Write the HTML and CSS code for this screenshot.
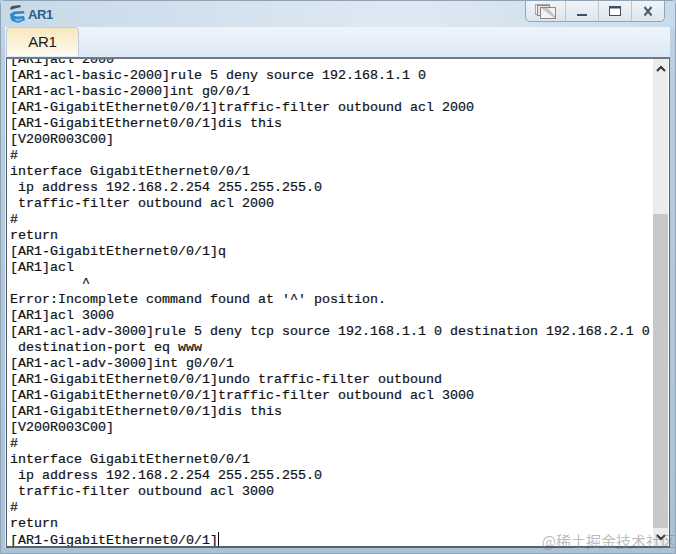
FILE: index.html
```
<!DOCTYPE html>
<html lang="en">
<head>
<meta charset="utf-8">
<title>AR1</title>
<link rel="stylesheet" href="styles.css">
</head>
<body>
<div class="window">
  <header class="titlebar">
    <div class="title">
      <svg class="app-icon" width="17" height="20" viewBox="0 0 17 20">
        <path d="M1 4 L3 2 L11 1 L12 3 L4 5 L2 6 Z" fill="#47535e"/>
        <path d="M1 10 L5 7.5 L15 7 L15.5 9.5 L7 10 L4.5 11.5 L8 12.5 L15 12 L16 16 L9 19 L3 17 L1.5 14 Z" fill="#2f88c9"/>
        <path d="M5 15 L13 14.5 L13.5 16 L8 17.5 Z" fill="#74bcea"/>
      </svg>
      <span class="title-text">AR1</span>
    </div>
    <div class="controls">
      <button class="ctl ctl-restore" aria-label="Restore">
        <svg width="21" height="15" viewBox="0 0 21 15">
          <rect x="0.5" y="0.5" width="14" height="10" fill="#f4f4f4" stroke="#a8a8a8"/>
          <rect x="2.5" y="1.5" width="12" height="10" fill="#e4e4e4" stroke="#8a8a8a"/>
          <rect x="5.5" y="3.5" width="15" height="11" fill="#f3f3f3" stroke="#8a8a8a"/>
          <path d="M6 4 H13 L20 12 V14 H19 L6 4 Z" fill="#c6c6c6"/>
        </svg>
      </button>
      <button class="ctl" aria-label="Minimize">
        <svg width="12" height="12" viewBox="0 0 12 12"><rect x="1" y="9" width="10" height="2" fill="#3c5064"/></svg>
      </button>
      <button class="ctl" aria-label="Maximize">
        <svg width="12" height="12" viewBox="0 0 12 12"><rect x="0.5" y="1.5" width="11" height="9" fill="#fff" stroke="#3c5064"/><rect x="0" y="1" width="12" height="2.5" fill="#3c5064"/></svg>
      </button>
      <button class="ctl ctl-close" aria-label="Close">
        <svg width="12" height="12" viewBox="0 0 12 12"><path d="M2.5 2 L9.5 10.5 M9.5 2 L2.5 10.5" stroke="#4a5a68" stroke-width="2" fill="none"/></svg>
      </button>
    </div>
  </header>
  <div class="panel">
    <nav class="tabs"><div class="tab">AR1</div></nav>
    <main class="terminal">
      <div class="screen">
<pre class="output">[AR1]acl 2000
[AR1-acl-basic-2000]rule 5 deny source 192.168.1.1 0
[AR1-acl-basic-2000]int g0/0/1
[AR1-GigabitEthernet0/0/1]traffic-filter outbound acl 2000
[AR1-GigabitEthernet0/0/1]dis this
[V200R003C00]
#
interface GigabitEthernet0/0/1
 ip address 192.168.2.254 255.255.255.0
 traffic-filter outbound acl 2000
#
return
[AR1-GigabitEthernet0/0/1]q
[AR1]acl
         ^
Error:Incomplete command found at '^' position.
[AR1]acl 3000
[AR1-acl-adv-3000]rule 5 deny tcp source 192.168.1.1 0 destination 192.168.2.1 0
 destination-port eq www
[AR1-acl-adv-3000]int g0/0/1
[AR1-GigabitEthernet0/0/1]undo traffic-filter outbound
[AR1-GigabitEthernet0/0/1]traffic-filter outbound acl 3000
[AR1-GigabitEthernet0/0/1]dis this
[V200R003C00]
#
interface GigabitEthernet0/0/1
 ip address 192.168.2.254 255.255.255.0
 traffic-filter outbound acl 3000
#
return
[AR1-GigabitEthernet0/0/1]<span class="caret"></span></pre>
      </div>
      <div class="scrollbar">
        <div class="arrow"><svg width="10" height="7" viewBox="0 0 10 7"><path d="M1 6 L5 2 L9 6" stroke="#333" stroke-width="2" fill="none"/></svg></div>
        <div class="track"><div class="thumb"></div></div>
        <div class="arrow"><svg width="10" height="7" viewBox="0 0 10 7"><path d="M1 1 L5 5 L9 1" stroke="#333" stroke-width="2" fill="none"/></svg></div>
      </div>
    </main>
  </div>
</div>
<div class="watermark">@稀土掘金技术社区</div>
</body>
</html>
```
FILE: styles.css
```
* { box-sizing: border-box; }
html, body { margin: 0; padding: 0; }
body {
  width: 676px;
  height: 554px;
  overflow: hidden;
  position: relative;
  background: #b4c9dc;
}
.window {
  width: 676px;
  height: 554px;
  display: flex;
  flex-direction: column;
  padding: 0 5px 5px 4px;
  border: 1px solid #8fa3b5;
  border-radius: 5px 5px 0 0;
  background: linear-gradient(#c6d8e8, #b9cee0 60px, #a9c2d8);
}
.titlebar {
  height: 26px;
  flex: none;
  display: flex;
  justify-content: space-between;
  margin: 0 -5px 0 -4px;
  padding: 0 10px 0 8px;
  background: linear-gradient(90deg, #c7d9e9, #dfe9f3 60%, #c9dbea);
}
.title {
  display: flex;
  align-items: center;
  gap: 2px;
}
.app-icon { flex: none; }
.title-text {
  font: bold 13px "Liberation Sans", Arial, sans-serif;
  letter-spacing: -0.4px;
  color: #2f5c85;
}
.controls {
  display: flex;
  height: 21px;
  border: 1px solid #93a6b6;
  border-top: 0;
  border-radius: 0 0 5px 5px;
  background: linear-gradient(#eef3f7, #dde6ee);
}
.ctl {
  width: 33px;
  padding: 0;
  border: 0;
  border-left: 1px solid #bcc8d2;
  background: none;
  display: flex;
  align-items: center;
  justify-content: center;
}
.ctl-restore { width: 39px; border-left: 0; }
.panel {
  flex: 1;
  min-height: 0;
  display: flex;
  flex-direction: column;
  background: linear-gradient(#e9f0f8, #dfeaf6);
}
.tabs {
  height: 30px;
  flex: none;
  padding-left: 1px;
  background: linear-gradient(#eef4fa, #dde9f6);
}
.tab {
  width: 73px;
  height: 29px;
  border: 1px solid #c0ccd8;
  border-bottom: 0;
  border-radius: 4px 4px 0 0;
  background: linear-gradient(#f6e8bc, #faf0d2 40%, #fdfaf0);
  font: 15px/27px "Liberation Sans", Arial, sans-serif;
  letter-spacing: -0.3px;
  color: #1a1a1a;
  text-align: center;
}
.terminal {
  flex: 1;
  min-height: 0;
  display: flex;
  margin-left: 1px;
  padding-right: 1px;
  background: #fff;
  border: 1px solid #555f69;
  border-top-width: 2px;
  border-bottom-width: 2px;
  border-top-color: #6f7a85;
}
.screen {
  flex: 1;
  min-width: 0;
  overflow: hidden;
  padding-left: 3px;
}
.output {
  margin: -7px 0 0 0;
  font: 13.333px/16px "Liberation Mono", "Courier New", monospace;
  color: #111;
  white-space: pre;
  -webkit-text-stroke: 0.2px #111;
}
.caret {
  display: inline-block;
  width: 1px;
  height: 15px;
  background: #000;
  vertical-align: -3px;
}
.scrollbar {
  width: 15px;
  flex: none;
  display: flex;
  flex-direction: column;
  background: #ececec;
}
.arrow {
  height: 18px;
  flex: none;
  display: flex;
  align-items: center;
  justify-content: center;
}
.track {
  flex: 1;
  display: flex;
  flex-direction: column;
  justify-content: flex-end;
}
.thumb {
  height: 314px;
  background: #c8c8c8;
}
.watermark {
  position: absolute;
  right: 0;
  bottom: 4px;
  font: 15px/18px "Noto Sans CJK SC", sans-serif;
  color: rgba(130, 130, 130, 0.55);
}
```
